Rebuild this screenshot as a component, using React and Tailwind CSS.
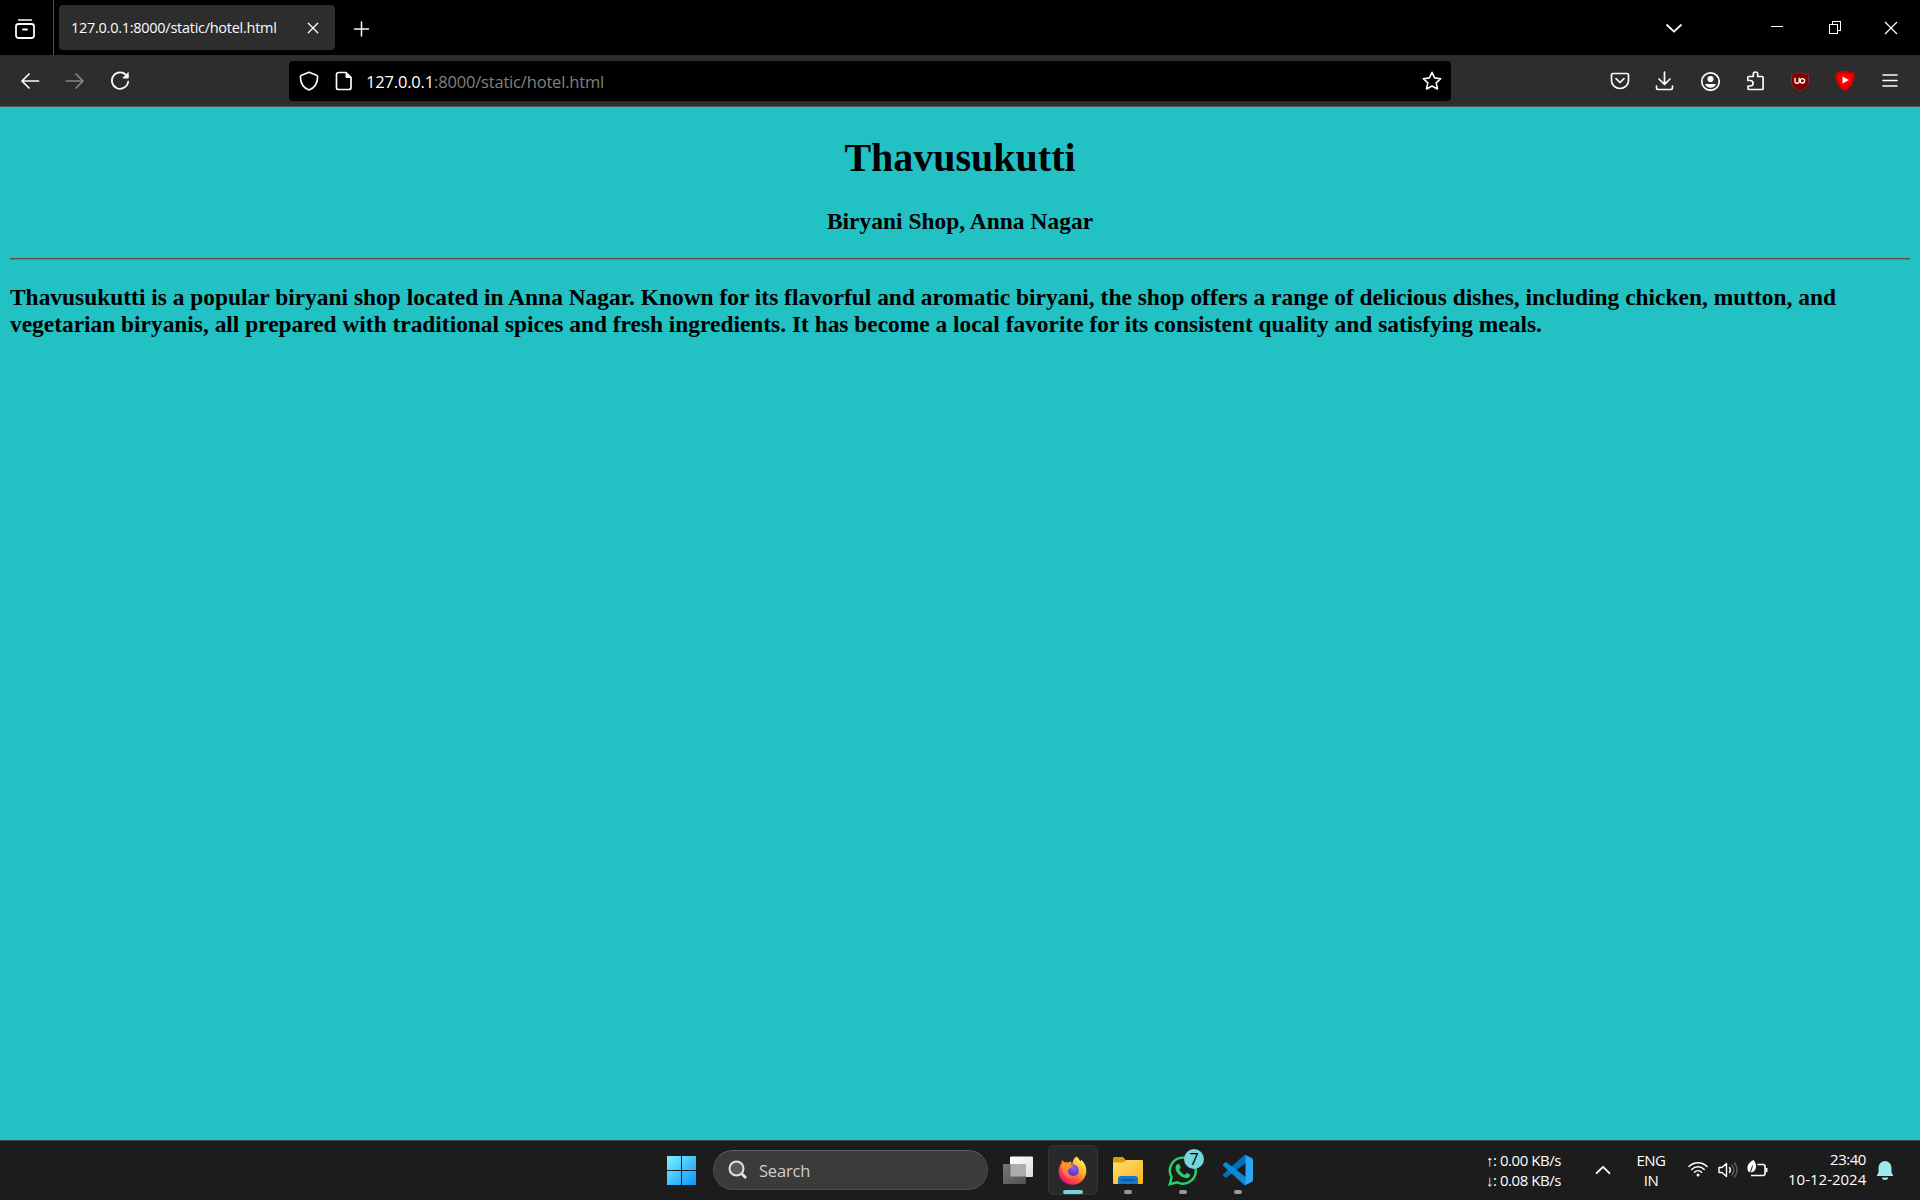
const UI = "font-['Open_Sans','Noto_Sans',sans-serif]";

function Stroke({ size = 20, w = 1.7, className = "", children }) {
  return (
    <svg width={size} height={size} viewBox="0 0 20 20" fill="none" stroke="currentColor" strokeWidth={w} strokeLinecap="round" strokeLinejoin="round" className={className}>
      {children}
    </svg>
  );
}

function TabBar() {
  return (
    <div className="flex h-[55px] items-center bg-black text-[#fbfbfe]">
      <div className="flex h-full w-[54px] items-center border-r border-[#555] pl-[15px] pt-0.5">
        <Stroke w={1.8}>
          <path d="M3.5 1h13" strokeWidth="1.4" />
          <rect x="1" y="5" width="18" height="14" rx="2.5" />
          <path d="M8 10.5h4" />
        </Stroke>
      </div>
      <div className="ml-[5px] flex h-[45px] w-[276px] items-center rounded bg-[#2d2d2d] pl-[12px]">
        <span className="w-[228px] whitespace-nowrap pt-px text-[14.5px] tracking-[-0.27px]">127.0.0.1:8000/static/hotel.html</span>
        <Stroke size={20} w={1.3} className="ml-[4px]"><path d="M5.3 5.3l9.4 9.4M14.7 5.3l-9.4 9.4" /></Stroke>
      </div>
      <Stroke size={20} w={1.5} className="ml-4 mt-0.5"><path d="M10.500 3v14M3.500 10h14" /></Stroke>
      <div className="ml-auto flex items-center">
        <Stroke className="mr-[83px]" w={1.8}><path d="M3 7l7 6.7L17 7" /></Stroke>
        <svg width="20" height="20" className="mr-[38px]" shapeRendering="crispEdges"><path d="M4 8.500h12" stroke="#fff" /></svg>
        <svg width="20" height="20" className="mr-9" fill="none" stroke="#fff" shapeRendering="crispEdges"><path d="M4.500 6.500h8v9h-8zM7.500 6.500v-3h8v9h-3" /></svg>
        <svg width="20" height="20" className="mr-[19px]" fill="none" stroke="#fff" strokeWidth="1.2"><path d="M4 4l12 12M16 4L4 16" /></svg>
      </div>
    </div>
  );
}

function Toolbar() {
  return (
    <div className="flex h-[52px] items-center border-b border-[#555] bg-[#2d2d2d] text-[#fbfbfe]">
      <Stroke className="ml-5"><path d="M18.500 10H2M9 3l-7 7 7 7" /></Stroke>
      <Stroke className="ml-[25px] text-[#858585]"><path d="M1.500 10H18M11 3l7 7-7 7" /></Stroke>
      <Stroke className="ml-[25px]"><path d="M16.500 4.500A8.200 8.200 0 1 0 18.200 10.500" /><path d="M18.200 2v5h-5z" fill="currentColor" strokeWidth="1" /></Stroke>
      <div className="ml-[159px] flex h-10 w-[1162px] items-center rounded bg-black">
        <Stroke className="ml-2.5" w={1.7}><path d="M10 1.200l7.500 3.100c.8.300 1.100.9 1.100 1.600C18.500 12 15 17 10 19 5 17 1.500 12 1.400 5.900c0-.7.3-1.300 1.100-1.600z" /></Stroke>
        <Stroke className="ml-[15px]" w={1.7}><path d="M4.500 1.500h7.500L17 6.500v10a2 2 0 0 1-2 2H4.500a2 2 0 0 1-2-2v-13a2 2 0 0 1 2-2z" /><path d="M12 1.500v5h5z" fill="currentColor" strokeWidth="1" /></Stroke>
        <div className="ml-[12px] whitespace-nowrap pt-[4px] text-[16.5px] tracking-[-0.18px] text-[#808080]"><span className="text-white">127.0.0.1</span>:8000/static/hotel.html</div>
        <Stroke className="ml-auto mr-[9px]" w={1.6}><path d="M10 1.300l2.600 5.600 6.100.8-4.500 4.200 1.200 6.100L10 15l-5.400 3 1.200-6.100L1.300 7.700l6.100-.8z" /></Stroke>
      </div>
      <div className="ml-auto mr-5 flex gap-[25px]">
        <Stroke><path d="M3 2.500h14a1.500 1.500 0 0 1 1.500 1.500v5.500a8.500 8 0 0 1-17 0V4A1.500 1.500 0 0 1 3 2.500z" /><path d="M6 7.700l4 3.800 4-3.800" /></Stroke>
        <Stroke><path d="M9.500 1v12M4 8l5.500 5.500L15 8M1.500 15v1.500a2 2 0 0 0 2 2h12a2 2 0 0 0 2-2V15" /></Stroke>
        <Stroke><circle cx="10.500" cy="10.500" r="8.700" /><circle cx="10.500" cy="8" r="3.100" fill="currentColor" stroke="none" /><path d="M5 13h11c-1 2.500-3 3.800-5.500 3.800S6 15.500 5 13z" fill="currentColor" stroke="none" /></Stroke>
        <Stroke><path d="M2.800 9V6.500a1 1 0 0 1 1-1H8.300V3.200a2.200 2.200 0 0 1 4.400 0v2.300h4.400a1 1 0 0 1 1 1v11a1 1 0 0 1-1 1h-13a1 1 0 0 1-1-1V15H5.300a2.500 2.500 0 0 0 0-5.500H2.800z" /></Stroke>
        <svg width="20" height="20" viewBox="0 0 20 20"><path d="M10 .7c3 2 5.500 2.600 8.500 2.800v7.500c0 3.500-2.500 6-8.500 8.700-6-2.700-8.500-5.200-8.500-8.700V3.500C4.500 3.300 7 2.700 10 .7z" fill="#800000" stroke="#8e3030" strokeWidth=".7" /><path d="M5 6.700v3.500a2 2 0 0 0 4.200 0V6.700" fill="none" stroke="#fff" strokeWidth="1.300" /><circle cx="12.400" cy="9.800" r="2.200" fill="none" stroke="#fff" strokeWidth="1.300" /></svg>
        <svg width="20" height="20" viewBox="0 0 20 20"><path d="M10 0c3.500 0 7 .7 9.500 2.200C20 10 17 16 10 20 3 16 0 10 .5 2.200 3 .7 6.500 0 10 0z" fill="#e00000" /><path d="M10 1.800c3 0 5.300.5 7.600 1.600.2 6-2.100 10.700-7.600 14.300C4.500 14.100 2.200 9.400 2.400 3.400 4.700 2.300 7 1.800 10 1.800z" fill="#f00" stroke="#b00000" strokeWidth=".7" /><path d="M7.500 5.500v7L14 9z" fill="#fff" /></svg>
        <Stroke w={1.6}><path d="M3 4h14M3 9.500h14M3 15h14" /></Stroke>
      </div>
    </div>
  );
}

function Page() {
  return (
    <main className="h-[1033px] bg-[#22c1c3] px-2.5 pt-[28px] font-['Liberation_Serif',serif] font-bold text-black">
      <h1 className="text-center text-[40px] leading-[46px]">Thavusukutti</h1>
      <h3 className="mt-[27px] text-center text-[23.4px] leading-[27px] tracking-[0.04px]">Biryani Shop, Anna Nagar</h3>
      <div className="mt-[23px] h-0.5 border-t border-[#5f4f4f] bg-[#8f7575]" />
      <h3 className="mt-[24px] whitespace-nowrap text-[23.4px] leading-[27px]">
        <span className="tracking-[0.015px]">Thavusukutti is a popular biryani shop located in Anna Nagar. Known for its flavorful and aromatic biryani, the shop offers a range of delicious dishes, including chicken, mutton, and</span><br />
        vegetarian biryanis, all prepared with traditional spices and fresh ingredients. It has become a local favorite for its consistent quality and satisfying meals.
      </h3>
    </main>
  );
}

function Slot({ children, dot }) {
  return (
    <div className="relative flex h-full w-[55px] items-center justify-center">
      {children}
      {dot && <span className="absolute bottom-1.5 left-[24px] h-1 w-2 rounded-full bg-[#9a9a9a]" />}
    </div>
  );
}

const CODE_BAR = "M96.461 10.796L75.857.876C73.472-.273 70.622.212 68.750 2.083L1.299 63.583c-1.815 1.654-1.813 4.511.004 6.162l5.510 5.009c1.485 1.350 3.722 1.450 5.321.237L93.361 13.370C96.086 11.303 100 13.246 100 16.667v-.240c0-2.400-1.375-4.590-3.539-5.631z";

function Taskbar() {
  return (
    <footer className="flex h-[60px] items-center border-t border-[#444] bg-[#1c1c1c] text-white">
      <svg className="ml-[667px]" width="29" height="29" viewBox="0 0 29 29">
        <defs><linearGradient id="win" gradientUnits="userSpaceOnUse" x1="0" y1="0" x2="29" y2="29"><stop stopColor="#7df3ff" /><stop offset="1" stopColor="#0a94fb" /></linearGradient></defs>
        <path d="M0 0h14v14H0zM15 0h14v14H15zM0 15h14v14H0zM15 15h14v14H15z" fill="url(#win)" />
      </svg>
      <div className="-mt-px ml-[17px] flex h-10 w-[275px] items-center rounded-full border border-[#4b4b4b] border-t-[#606060] bg-[#3b3b3b]">
        <svg className="ml-3.5" width="20" height="20" fill="none" stroke="#e0e2e6" strokeWidth="2"><circle cx="8.500" cy="8.500" r="7" fill="#5a5a5a" /><path d="M13.500 13.500L18 18" strokeWidth="2.800" /></svg>
        <span className="ml-[11px] pt-0.5 text-[16.5px] tracking-[-0.2px] text-[#cfcfcf]">Search</span>
      </div>
      <div className="ml-[2px] flex h-full">
        <Slot>
          <svg className="-mt-0.5" width="30" height="28" viewBox="0 0 30 28"><defs><linearGradient id="tv" x2="1" y2="1"><stop stopColor="#fff" /><stop offset="1" stopColor="#ddd" /></linearGradient><linearGradient id="tv2" x2="1" y2="1"><stop stopColor="#777" /><stop offset="1" stopColor="#505050" /></linearGradient></defs><rect x="7" y=".5" width="23" height="20.500" rx="1" fill="url(#tv)" /><rect y="8" width="23" height="20" rx="1" fill="url(#tv2)" /><path d="M7.500 8H23v12.500H7.500z" fill="#adadad" /></svg>
        </Slot>
        <Slot>
          <div className="relative mt-[-1px] flex h-[50px] w-[50px] items-center justify-center rounded-md border border-[#353535] bg-[#292929]">
            <svg width="29" height="29" viewBox="0 0 29 29">
              <defs>
                <linearGradient id="ff" x1=".85" y1=".1" x2=".2" y2=".9"><stop stopColor="#fff44f" /><stop offset=".35" stopColor="#ffb02e" /><stop offset=".65" stopColor="#ff5a36" /><stop offset="1" stopColor="#f0127a" /></linearGradient>
                <linearGradient id="ff2" x1=".3" y1="0" x2=".6" y2="1"><stop stopColor="#ff9a2a" /><stop offset="1" stopColor="#ff5a4a" /></linearGradient>
                <radialGradient id="ffc" cx=".6" cy=".3"><stop stopColor="#a154f5" /><stop offset="1" stopColor="#5a3fc4" /></radialGradient>
              </defs>
              <path d="M18.500.5c2 1.500 3.200 3.300 3.800 5l1-1.700c3.500 3.200 5.200 7 5 11.500C28 23 22 28.700 14.500 28.700S.8 23 .7 15.500c0-4 1.300-6.600 2.800-8.500l.4-3 3 2.500c1.200-.4 2.500-.4 3.600 0 1-.7 1.800-1 3-1-.4.800-.4 1.200-.3 2h1.300C14.800 4.500 16 2 18.500.5z" fill="url(#ff)" />
              <circle cx="14.500" cy="14.500" r="6.200" fill="url(#ffc)" />
              <path d="M3.500 8.500c3-1.500 5.500-.5 7.500.5 1.500.2 3 .2 4.300.4-.8 2-2.500 2.300-3.600 3-1.700 1-1.700 2.600-1.400 4.100.8 2.500 3 4 5.700 3.500 2.200-.4 3.900-1.800 4.600-3.600 0 3.600-3.100 6.600-7.100 6.600-5 0-8-3.500-8.500-7.500C4 13.500 3.500 11 3.500 8.500z" fill="url(#ff2)" />
            </svg>
            <span className="absolute bottom-0 left-[14px] h-1 w-5 rounded-full bg-[#75d5dc]" />
          </div>
        </Slot>
        <Slot dot>
          <svg width="30" height="27" viewBox="0 0 30 27"><defs><linearGradient id="fo" x2="1" y2="1"><stop stopColor="#ffdf76" /><stop offset="1" stopColor="#fbb317" /></linearGradient></defs><path d="M1.500 0H10l3 3.500h15.500V9H0V1.500A1.500 1.500 0 0 1 1.500 0z" fill="#df9c09" /><path d="M0 5.500h10.500L13.500 3H29a1 1 0 0 1 1 1v22a1 1 0 0 1-1 1H1a1 1 0 0 1-1-1z" fill="url(#fo)" /><path d="M5 27v-5a3 3 0 0 1 3-3h14a3 3 0 0 1 3 3v5z" fill="#1478cc" /><path d="M8 23h14" stroke="#0753a0" strokeWidth="1.500" /></svg>
        </Slot>
        <Slot dot>
          <svg width="30" height="30" viewBox="0 0 30 30" fill="none"><path d="M1.800 28.200l1.800-7A13 13 0 1 1 9 26.300z" stroke="#25d366" strokeWidth="2.400" /><path d="M10.500 8c.5 0 .9.300 1.100.8l1 2.500c.2.600-.9 1.700-1.400 2.200 1.300 2.500 3 4.200 5.700 5.400.7-.6 1.600-2 2.200-1.800l2.500 1.200c.7.400.8.500.7 1-.3 2-2.500 3-4.500 2.800-5.800-1-9.700-5.500-10.300-9.500-.2-2.500 1.500-4.600 3-4.600z" fill="#25d366" /></svg>
          <span className="absolute left-[29px] top-2 flex h-5 w-5 items-center justify-center rounded-full bg-[#75d5dc] text-base leading-5 text-black">7</span>
        </Slot>
        <Slot dot>
          <svg className="-mt-0.5" width="30" height="30" viewBox="0 0 100 100">
            <path d={CODE_BAR} fill="#0070b8" />
            <path d={CODE_BAR} transform="matrix(1 0 0 -1 0 100)" fill="#0b88d8" />
            <path d="M75.858 99.126c-2.386 1.148-5.236.663-7.108-1.209C71.056 100.223 75 98.590 75 95.328V4.672c0-3.262-3.944-4.895-6.250-2.589 1.872-1.872 4.722-2.357 7.108-1.209l20.601 9.907C98.623 11.822 100 14.011 100 16.413v67.174c0 2.402-1.377 4.592-3.541 5.633z" fill="#2ba6f5" />
          </svg>
        </Slot>
      </div>
      <div className="ml-auto flex h-full items-center text-[15px] leading-5">
        <div className="-mt-0.5 mr-[34px] w-[75px] whitespace-nowrap tracking-[-0.45px]"><div>↑: 0.00 KB/s</div><div>↓: 0.08 KB/s</div></div>
        <Stroke size={16} w={2.3} className="-mt-0.5 mr-[24px]"><path d="M2 14l8-8 8 8" /></Stroke>
        <div className="-mt-px mr-[21px] w-[32px] text-center tracking-[-0.5px]"><div>ENG</div><div>IN</div></div>
        <svg className="-mt-1 mr-2.5" width="20" height="16" viewBox="0 0 20 16" fill="none" stroke="#fff" strokeWidth="1.500" strokeLinecap="round"><path d="M1 5.500a12.500 12.500 0 0 1 18 0M3.700 8.500a8.800 8.800 0 0 1 12.600 0M6.500 11.200a5 5 0 0 1 7 0" /><circle cx="10" cy="14" r="1.500" fill="#fff" stroke="none" /></svg>
        <svg className="-mt-0.5 mr-[9px]" width="20" height="18" viewBox="0 0 20 18" fill="none" stroke="#fff" strokeWidth="1.400" strokeLinejoin="round" strokeLinecap="round"><path d="M1 6.500v5h3l4.500 4V2.500l-4.500 4z" /><path d="M11.500 6.500q1.800 2.500 0 5" /><path d="M14 4q3.500 5 0 10M16.500 2q5 7 0 14" stroke="#5d5d5d" /></svg>
        <svg className="-mt-1 mr-5" width="21" height="18" viewBox="0 0 21 18" fill="none" stroke="#fff" strokeWidth="1.600" strokeLinejoin="round"><path d="M10.500 4.500H16a2 2 0 0 1 2 2v7a2 2 0 0 1-2 2H4" /><path d="M19.500 8v4" strokeWidth="2" /><path d="M6.500 0C2.500 2 0 5 .5 9c.2 2 1 3 2.500 3.500C7.500 12.500 9.500 9 9 5 8.500 3 7.800 1.500 6.500 0z" fill="#fff" stroke="none" /><path d="M5.500 5.500Q5 10 1.500 15" stroke="#1c1c1c" strokeWidth="1" /></svg>
        <div className="-mt-[3px] mr-[11px] w-[78px] whitespace-nowrap text-right"><div className="tracking-[-0.45px]">23:40</div><div>10-12-2024</div></div>
        <svg className="mr-[27px]" width="16" height="19" viewBox="0 0 16 19" fill="#9fe8ec"><path d="M8 0a6.500 6.500 0 0 1 6.500 6.500v4.700l1.500 3v.8H0v-.8l1.500-3V6.500A6.500 6.500 0 0 1 8 0z" /><path d="M5 16.500h6a3 2.500 0 0 1-6 0z" /></svg>
      </div>
    </footer>
  );
}

export default function App() {
  return (
    <div className={`h-[1200px] w-[1920px] overflow-hidden ${UI}`}>
      <TabBar />
      <Toolbar />
      <Page />
      <Taskbar />
    </div>
  );
}
